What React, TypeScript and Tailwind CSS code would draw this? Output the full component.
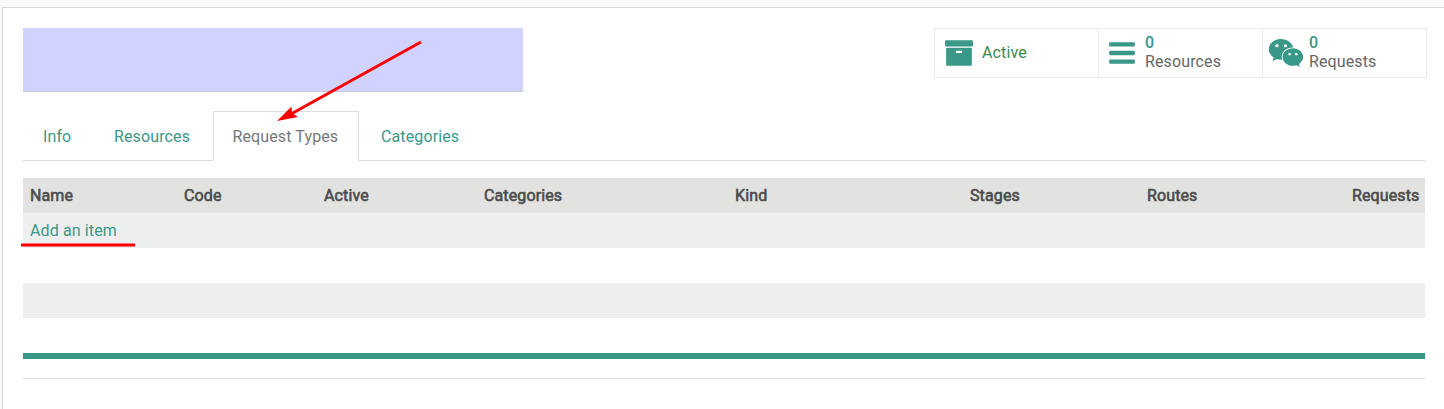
import { FaWeixin } from "react-icons/fa";

const columns = [
  { label: "Name", width: "w-[154px]" },
  { label: "Code", width: "w-[140px]" },
  { label: "Active", width: "w-[160px]" },
  { label: "Categories", width: "w-[251px]" },
  { label: "Kind", width: "w-[235px]" },
  { label: "Stages", width: "w-[177px]" },
  { label: "Routes", width: "w-[205px]" },
  { label: "Requests", width: "" },
];

function ArchiveIcon() {
  return (
    <svg width="30" height="30" viewBox="0 0 1792 1792" fill="currentColor" className="mt-[1.5px] shrink-0">
      <path d="M1088 832q0-26-19-45t-45-19h-256q-26 0-45 19t-19 45 19 45 45 19h256q26 0 45-19t19-45zm576-192v960q0 26-19 45t-45 19h-1408q-26 0-45-19t-19-45v-960q0-26 19-45t45-19h1408q26 0 45 19t19 45zm64-448v256q0 26-19 45t-45 19h-1536q-26 0-45-19t-19-45v-256q0-26 19-45t45-19h1536q26 0 45 19t19 45z" />
    </svg>
  );
}

function BarsIcon() {
  return (
    <svg width="30" height="30" viewBox="0 0 1792 1792" fill="currentColor" className="mt-[1.5px] shrink-0">
      <path d="M1664 1344v128q0 26-19 45t-45 19h-1408q-26 0-45-19t-19-45v-128q0-26 19-45t45-19h1408q26 0 45 19t19 45zm0-512v128q0 26-19 45t-45 19h-1408q-26 0-45-19t-19-45v-128q0-26 19-45t45-19h1408q26 0 45 19t19 45zm0-512v128q0 26-19 45t-45 19h-1408q-26 0-45-19t-19-45v-128q0-26 19-45t45-19h1408q26 0 45 19t19 45z" />
    </svg>
  );
}

export default function App() {
  return (
    <div className="relative h-[409px] overflow-hidden bg-[#f9f9f9] pl-[2px] pt-[7px] font-['Roboto',sans-serif] text-base leading-[19px] tracking-[0.12px] text-[#4c4c4c]">
      <main className="h-[402px] border-l border-t border-[#d7d7d7] bg-white pl-5 pr-[19px] pt-5">
        <header className="flex h-[64px] items-start justify-between">
          <div className="h-16 w-[500px] border-b border-[#c8c8d4] bg-[#d2d2ff]" />
          <div className="-mr-0.5 flex h-[50px] w-[493px] border border-[#eaeaea] text-[#3a9888]">
            <div className="flex w-[164px] items-center border-r border-[#eaeaea] pb-0.5 pl-[9px]">
              <ArchiveIcon />
              <span className="ml-2 text-[#3c8a4a]">Active</span>
            </div>
            <div className="flex w-[164px] items-center border-r border-[#eaeaea] pb-0.5 pl-2">
              <BarsIcon />
              <div className="ml-2"><div className="font-medium">0</div><div className="text-[#666]">Resources</div></div>
            </div>
            <div className="flex items-center pb-0.5 pl-[5px]">
              <FaWeixin size={36} className="mt-[1.5px] shrink-0" />
              <div className="ml-[5px]"><div className="font-medium">0</div><div className="text-[#666]">Requests</div></div>
            </div>
          </div>
        </header>
        <nav className="mt-[19px] flex h-[50px] border-b border-[#dddddd] text-[#3a9888]">
          <span className="w-[91px] pl-5 pt-4">Info</span>
          <span className="w-[99px] pt-4">Resources</span>
          <span className="h-[50px] w-[146px] border border-b-white border-[#dddddd] bg-white pl-[18.5px] pt-[15px] text-[#777]">Request Types</span>
          <span className="pl-[22px] pt-4">Categories</span>
        </nav>
        <section className="mt-[17px]">
          <div className="flex h-[35px] items-center bg-[#e2e2e0] pl-[7px] [-webkit-text-stroke:0.6px_#4c4c4c]">
            {columns.map((c) => <span key={c.label} className={c.width}>{c.label}</span>)}
          </div>
          <div className="flex h-[35px] items-center bg-[#edefee] pl-[7px] text-[#3a9888]">Add an item</div>
          <div className="h-[35px]" />
          <div className="h-[35px] bg-[#edefee]" />
          <div className="h-[35px]" />
          <div className="h-[6px] bg-[#3a9888]" />
        </section>
        <div className="mt-[19px] h-px bg-[#dddddd]" />
      </main>
      <svg className="pointer-events-none absolute left-0 top-0" width="1444" height="409">
        <path d="M421 42 L291 114" stroke="#f00" strokeWidth="3" />
        <path d="M277 121 L291.5 106.5 L292 113 L298 117Z" fill="#f00" />
        <path d="M21 245H135" stroke="#f00" strokeWidth="3" />
      </svg>
    </div>
  );
}
